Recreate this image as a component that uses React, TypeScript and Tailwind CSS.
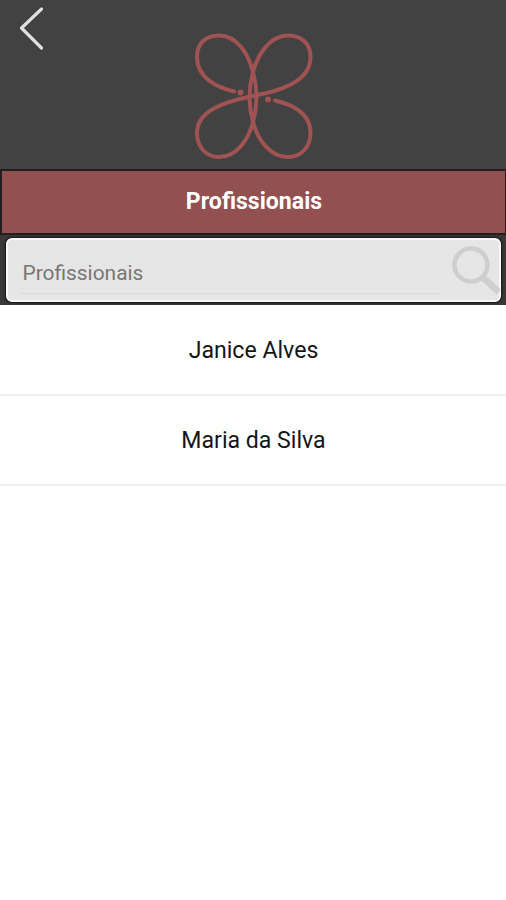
const professionals = ["Janice Alves", "Maria da Silva"];

function Logo() {
  return (
    <svg className="h-[145px] w-[140px]" viewBox="0 0 140 145" fill="none" stroke="#a05352" strokeWidth="4" strokeLinecap="round">
      <path d="M49 66.500C34 63 12 54 12 32C12 18 21 10.500 34 10.500C52 10.500 63.500 29 68 47C72.500 63 72.500 81 68 97C63 116 51 132 34 132C21 132 12 122 12 108C12 86 38 77 68 71C92 66.500 125.500 58 125.500 32C125.500 18 116 10.500 103 10.500C85 10.500 73 29 68 47C63.500 63 63.500 81 68 97C73 116 86 132 103 132C116 132 125.500 122 125.500 108C125.500 86 104 79 90 75.500" />
      <circle cx="55.500" cy="67.500" r="3" fill="#a05352" stroke="none" />
      <circle cx="83" cy="74.500" r="3" fill="#a05352" stroke="none" />
    </svg>
  );
}

export default function App() {
  return (
    <main className="flex h-[900px] w-full flex-col bg-white font-[Roboto,sans-serif]">
      <header className="grid h-[169px] grid-cols-[185px_140px_1fr] bg-[#424242]">
        <button aria-label="Voltar" className="h-[60px] w-[60px]">
          <svg className="h-[60px] w-[60px]" viewBox="0 0 60 60" fill="none" strokeLinecap="round" strokeLinejoin="round">
            <path d="M41.500 9L21.500 28L41.500 48" stroke="#353535" strokeWidth="5" />
            <path d="M41.500 9L21.500 28L41.500 48" stroke="#dedede" strokeWidth="3.400" />
          </svg>
        </button>
        <div className="pt-[25px]"><Logo /></div>
      </header>
      <h1 className="flex h-[66px] items-center justify-center border-2 border-r-[1px] border-[#241e1e] bg-[#925150] pt-px pl-px text-[23.1px] font-bold text-white">
        Profissionais
      </h1>
      <div className="h-[70px] bg-[#3a3837] pt-[3px] pr-[5px] pb-[3px] pl-[6px]">
        <label className="flex h-full rounded-[6px] border-2 border-[#f8f8f8] bg-[#e6e6e6] pl-[12px] shadow-[0_0_2px_1px_#151515]">
          <input
            className="h-[54px] w-[421px] shrink-0 border-b border-[#dadada] bg-transparent pt-[13px] pl-[2.5px] text-[20.9px] text-[#777] outline-none placeholder:text-[#777] placeholder:opacity-100"
            placeholder="Profissionais"
          />
          <svg className="ml-[9px] h-[60px] w-[50px] shrink-0" viewBox="450 240 50 60" fill="none" stroke="#cfcfcf">
            <circle cx="471" cy="265" r="16.500" strokeWidth="4.500" />
            <path d="M482.500 277L499 292" strokeWidth="6.500" />
          </svg>
        </label>
      </div>
      <ul className="pt-px">
        {professionals.map((name) => (
          <li key={name} className="flex h-[90px] items-center justify-center border-b-2 border-[#eee] pt-[3px] pl-px text-[23.1px] text-[#151515]">
            {name}
          </li>
        ))}
      </ul>
    </main>
  );
}
